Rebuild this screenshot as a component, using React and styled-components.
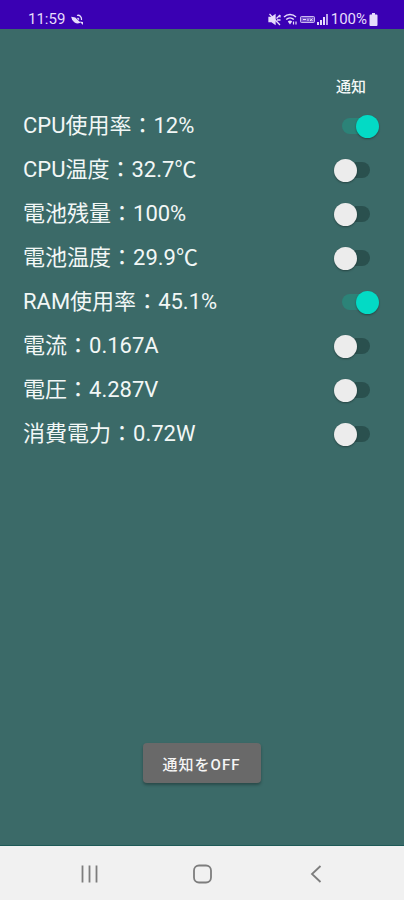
import React from "react";
import styled, { createGlobalStyle } from "styled-components";

const GlobalStyle = createGlobalStyle`
  * {
    box-sizing: border-box;
  }
  body {
    margin: 0;
    background: #3b6a68;
    font-family: Roboto, "Noto Sans CJK JP", sans-serif;
  }
`;

const Screen = styled.div`
  display: flex;
  flex-direction: column;
  min-height: 100vh;
  background: #3b6a68;
  color: #f2f7f6;
`;

const StatusBar = styled.header`
  display: flex;
  align-items: center;
  justify-content: space-between;
  height: 29px;
  padding: 9px 26px 0 28px;
  background: #3a00b3;
  color: #e6dcfb;
  font-size: 15px;
  line-height: 20px;
`;

const StatusGroup = styled.div`
  display: flex;
  align-items: center;
  gap: ${props => props.gap};

  svg {
    display: block;
  }
`;

const Content = styled.main`
  display: flex;
  flex: 1;
  flex-direction: column;
  padding: 48px 24px 62px 23px;
  border-bottom: 1px solid #1d5a57;
`;

const ColumnTitle = styled.div`
  align-self: flex-end;
  margin-right: 14px;
  margin-bottom: 7px;
  font-size: 15px;
  font-weight: 500;
  line-height: 20px;
`;

const Row = styled.label`
  display: flex;
  align-items: center;
  justify-content: space-between;
  height: 44px;
  font-size: 22px;
  line-height: 32px;
`;

const Switch = styled.input`
  appearance: none;
  display: flex;
  align-items: center;
  width: 46px;
  height: 24px;
  margin: 0;
  cursor: pointer;

  &::before {
    content: "";
    width: 28px;
    height: 16px;
    margin-left: 8px;
    border-radius: 8px;
    background: ${props => (props.checked ? "#2c8378" : "#2a504e")};
  }

  &::after {
    content: "";
    width: 23px;
    height: 23px;
    margin-left: ${props => (props.checked ? "-14px" : "-36px")};
    border-radius: 50%;
    background: ${props => (props.checked ? "#03dac5" : "#ececec")};
    box-shadow: 0 1px 2px rgba(0, 0, 0, 0.35);
  }
`;

const OffButton = styled.button`
  align-self: center;
  width: 118px;
  height: 40px;
  margin-top: auto;
  padding: 0;
  border: 0;
  border-radius: 4px;
  background: #696969;
  box-shadow: 0 2px 3px rgba(0, 0, 0, 0.3);
  color: #f5f5f5;
  font-family: inherit;
  font-size: 15px;
  font-weight: 500;
  letter-spacing: 1px;
  cursor: pointer;
`;

const NavBar = styled.nav`
  display: grid;
  grid-template-columns: repeat(3, 1fr);
  height: 54px;
  padding: 2px 32px 0;
  background: #f1f1f1;
`;

const NavButton = styled.button`
  display: flex;
  align-items: center;
  justify-content: center;
  padding: 0;
  border: 0;
  background: none;
  color: #7d7d7d;
  cursor: pointer;
`;

const SatelliteIcon = () => (
  <svg width="13" height="13" viewBox="0 0 13 13" fill="none" stroke="currentColor" strokeWidth="1.3">
    <path d="M1 4.5C1.500 8 5 10.500 8.500 9.500L4 5z" fill="currentColor" />
    <path d="M6 2.500C8.500 1.500 11 4 10.500 7M6.500 5l1.500 1.500" />
    <path d="M8.500 8.500l3.500 3.500V9z" fill="currentColor" stroke="none" />
  </svg>
);

const MuteIcon = () => (
  <svg width="13" height="13" viewBox="0 0 13 13" fill="none" stroke="currentColor" strokeWidth="1.3">
    <path d="M1 4.500h2.500L7 2v9L3.500 8.500H1z" fill="currentColor" />
    <path d="M1.500 1l10.500 11M8.500 5.500L12 2M9 7h3.500M12 2v2.500" />
  </svg>
);

const WifiIcon = () => (
  <svg width="15" height="13" viewBox="0 0 15 13" fill="none" stroke="currentColor" strokeWidth="1.5">
    <path d="M1 4c3.500-3.300 8.500-3.300 12 0M3.200 6.500c2.200-2 5.400-2 7.600 0" />
    <path d="M4.800 8.500c1.400-1.200 3-1.200 4.400 0L7 11.500z" fill="currentColor" stroke="none" />
    <path d="M10.500 11.500V8.500M13 8.500v3" strokeWidth="1.2" />
  </svg>
);

const VolteIcon = () => (
  <svg width="15" height="13" viewBox="0 0 15 13" fill="none" stroke="currentColor">
    <rect x="0.500" y="3.500" width="14" height="6" rx="1" fill="currentColor" fillOpacity="0.35" strokeOpacity="0.8" />
    <path d="M3 6.500h3M8 5.500v2.500M10 5.500l2.500 2.500M12.500 5.500L10 8" />
  </svg>
);

const SignalIcon = () => (
  <svg width="12" height="13" viewBox="0 0 12 13" fill="currentColor">
    <path d="M0 9h2v3H0zM3 7h2v5H3zM6 4h2v8H6z" />
    <path d="M9 1h2v11H9z" opacity="0.75" />
  </svg>
);

const BatteryIcon = () => (
  <svg width="9" height="13" viewBox="0 0 9 13" fill="currentColor">
    <path d="M3 0h3v1.500h1.500a1 1 0 0 1 1 1V12a1 1 0 0 1-1 1h-6a1 1 0 0 1-1-1V2.500a1 1 0 0 1 1-1H3z" />
  </svg>
);

const RecentsIcon = () => (
  <svg width="20" height="20" viewBox="0 0 20 20" fill="none" stroke="currentColor" strokeWidth="1.800">
    <path d="M3.500 1.500v17M10.500 1.500v17M17.500 1.500v17" />
  </svg>
);

const HomeIcon = () => (
  <svg width="20" height="20" viewBox="0 0 20 20" fill="none" stroke="currentColor" strokeWidth="1.800">
    <rect x="2" y="1.500" width="17" height="17" rx="5" />
  </svg>
);

const BackIcon = () => (
  <svg width="20" height="20" viewBox="0 0 20 20" fill="none" stroke="currentColor" strokeWidth="1.800">
    <path d="M15.500 2L7 10l8.500 8" />
  </svg>
);

class App extends React.Component {
  constructor(props) {
    super(props);
    this.state = {
      items: [
        { id: 1, name: "CPU使用率", value: "12%", notify: true },
        { id: 2, name: "CPU温度", value: "32.7℃", notify: false },
        { id: 3, name: "電池残量", value: "100%", notify: false },
        { id: 4, name: "電池温度", value: "29.9℃", notify: false },
        { id: 5, name: "RAM使用率", value: "45.1%", notify: true },
        { id: 6, name: "電流", value: "0.167A", notify: false },
        { id: 7, name: "電圧", value: "4.287V", notify: false },
        { id: 8, name: "消費電力", value: "0.72W", notify: false },
      ],
    };
  }

  toggle(id) {
    this.setState(state => ({
      items: state.items.map(item => (item.id === id ? { ...item, notify: !item.notify } : item)),
    }));
  }

  allOff() {
    this.setState(state => ({
      items: state.items.map(item => ({ ...item, notify: false })),
    }));
  }

  render() {
    return (
      <Screen lang="ja">
        <GlobalStyle />
        <StatusBar>
          <StatusGroup gap="6px">
            <span>11:59</span>
            <SatelliteIcon />
          </StatusGroup>
          <StatusGroup gap="2px">
            <MuteIcon />
            <WifiIcon />
            <VolteIcon />
            <SignalIcon />
            <span>100%</span>
            <BatteryIcon />
          </StatusGroup>
        </StatusBar>
        <Content>
          <ColumnTitle>通知</ColumnTitle>
          {this.state.items.map(item => (
            <Row key={item.id}>
              <span>{item.name}：{item.value}</span>
              <Switch
                type="checkbox"
                role="switch"
                checked={item.notify}
                onChange={() => this.toggle(item.id)}
              />
            </Row>
          ))}
          <OffButton type="button" onClick={() => this.allOff()}>通知をOFF</OffButton>
        </Content>
        <NavBar>
          <NavButton type="button" aria-label="履歴"><RecentsIcon /></NavButton>
          <NavButton type="button" aria-label="ホーム"><HomeIcon /></NavButton>
          <NavButton type="button" aria-label="戻る"><BackIcon /></NavButton>
        </NavBar>
      </Screen>
    );
  }
}

export default App;
